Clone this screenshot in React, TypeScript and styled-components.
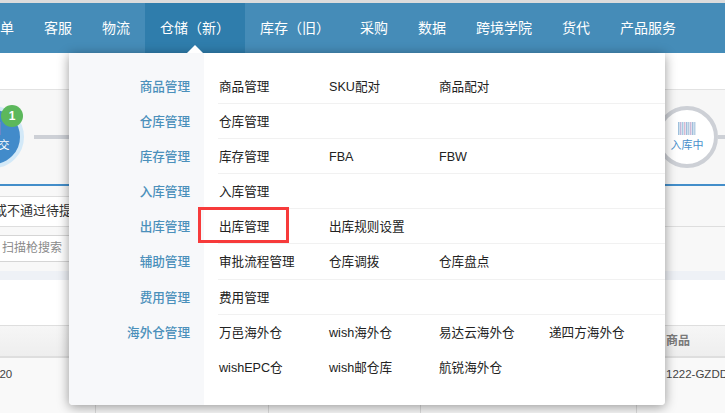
import React from 'react'
import styled, { createGlobalStyle } from 'styled-components'

const navItems = ['订单', '客服', '物流', '仓储（新）', '库存（旧）', '采购', '数据', '跨境学院', '货代', '产品服务']

const menuGroups = [
  { title: '商品管理', items: ['商品管理', 'SKU配对', '商品配对'] },
  { title: '仓库管理', items: ['仓库管理'] },
  { title: '库存管理', items: ['库存管理', 'FBA', 'FBW'] },
  { title: '入库管理', items: ['入库管理'] },
  { title: '出库管理', items: ['出库管理', '出库规则设置'], marked: '出库管理' },
  { title: '辅助管理', items: ['审批流程管理', '仓库调拨', '仓库盘点'] },
  { title: '费用管理', items: ['费用管理'] },
  {
    title: '海外仓管理',
    items: ['万邑海外仓', 'wish海外仓', '易达云海外仓', '递四方海外仓', 'wishEPC仓', 'wish邮仓库', '航锐海外仓'],
  },
]

const barColors = ['#9fc0dc', '#c3b8d8', '#a8cbe2', '#d8b9d2', '#9dbfdc', '#b5c9e0', '#cdb8d6', '#9fc0dc', '#b8cfe4']
const currentBarColors = ['#9fc0dc', '#c3b8d8', '#a8cbe2', '#d8b9d2', '#9dbfdc', '#b5c9e0', '#cdb8d6', '#9a7fc4']

const GlobalStyle = createGlobalStyle`
  html, body {
    margin: 0;
    height: 413px;
    overflow: hidden;
    background: #fff;
    font-family: "Liberation Sans", "Noto Sans CJK SC", sans-serif;
  }
`

const Page = styled.div`
  position: relative;
  width: 725px;
  height: 413px;
  overflow: hidden;
  border-top: 3px solid #dcdcdc;
  box-sizing: border-box;
`

const NavBar = styled.nav`
  display: flex;
  height: 50px;
  margin-left: -29px;
  background: #458cb8;
`

const NavItem = styled.div<{ $active?: boolean }>`
  position: relative;
  padding: 0 15px;
  line-height: 50px;
  font-size: 14px;
  white-space: nowrap;
  color: #fff;
  background: ${(p) => (p.$active ? '#2f7dac' : 'transparent')};
`

const SubHeader = styled.div`
  height: 36px;
  background: #fff;
  border-bottom: 1px solid #e2e2e2;
`

const Stepper = styled.div`
  display: flex;
  align-items: center;
  height: 94px;
  margin-left: -38px;
  background: #f7f7f7;
  border-bottom: 2px solid #438eca;
`

const StepCircle = styled.div<{ $current?: boolean }>`
  position: relative;
  flex: none;
  display: flex;
  flex-direction: column;
  align-items: center;
  justify-content: center;
  gap: 3px;
  width: 62px;
  height: 62px;
  box-sizing: border-box;
  border-radius: 50%;
  border: 4px solid ${(p) => (p.$current ? '#d3e9f8' : '#cdd0d6')};
  background: ${(p) => (p.$current ? '#428bca' : '#fff')};
  color: ${(p) => (p.$current ? '#fff' : '#4a8fcb')};
  font-size: 11px;
  line-height: 14px;
  white-space: nowrap;
`

const StepBadge = styled.span`
  position: absolute;
  top: -5px;
  right: -3px;
  width: 22px;
  height: 22px;
  border-radius: 50%;
  background: #5cb85c;
  color: #fff;
  font-size: 12px;
  font-weight: 700;
  line-height: 22px;
  text-align: center;
`

const Connector = styled.div<{ $end?: boolean }>`
  height: 4px;
  background: #cdd0d6;
  ${(p) => (p.$end ? 'flex: none; width: 7px;' : 'flex: 1; margin-left: 10px;')}
`

const FilterArea = styled.div`
  height: 85px;
  padding-top: 10px;
  box-sizing: border-box;
  background: #f8f8f8;
`

const NoticeRow = styled.div`
  height: 31px;
  box-sizing: border-box;
  border-bottom: 1px solid #dedede;
  font-size: 13px;
  line-height: 28px;
  color: #333;
  white-space: nowrap;
  overflow: hidden;
`

const NoticePanel = styled.div`
  width: 80px;
  height: 30px;
  margin-left: -6px;
  background: #fff;
  border-top: 1px solid #dedede;
  box-sizing: border-box;
`

const SearchRow = styled.div`
  height: 27px;
  margin-top: 8px;
  box-sizing: border-box;
  width: 80px;
  padding-left: 2px;
  background: #fff;
  border-top: 1px solid #d5d5d5;
  border-bottom: 1px solid #d5d5d5;
  font-size: 12px;
  line-height: 25px;
  color: #8a8a8a;
  white-space: nowrap;
`

const RowDivider = styled.div`
  height: 9px;
  background: #eef1f6;
`

const TableGap = styled.div`
  height: 45px;
  background: #fff;
`

const TableGrid = styled.div`
  display: grid;
  grid-template-columns: 96px 173px 152px 216px 1fr;
`

const HeadRow = styled(TableGrid)`
  height: 33px;
  box-sizing: border-box;
  border-top: 1px solid #dedede;
  border-bottom: 2px solid #dedede;
  background: linear-gradient(#f6f6f6, #eeeeee);
  font-size: 12px;
  font-weight: 700;
  line-height: 30px;
  color: #7a7a7a;
`

const BodyRow = styled(TableGrid)`
  height: 56px;
  background: #f9f9f9;
  font-size: 11.5px;
  line-height: 32px;
  color: #444;
`

const BodyCell = styled.div`
  border-right: 1px solid #dcdcdc;
  white-space: nowrap;
  overflow: hidden;
`

const FirstValue = styled.span`
  margin-left: -7px;
`

const LastCell = styled.div`
  padding-left: 29px;
  white-space: nowrap;
  overflow: hidden;
`

const Menu = styled.div`
  position: absolute;
  top: 50px;
  left: 69px;
  width: 596px;
  height: 352px;
  display: flex;
  flex-direction: column;
  padding: 16px 0 20px;
  box-sizing: border-box;
  border-radius: 0 0 4px 4px;
  background: linear-gradient(to right, #f7f8fa 135px, #fff 135px);
  box-shadow: 0 2px 12px rgba(0, 0, 0, 0.4);
`

const MenuCaret = styled.span`
  position: absolute;
  top: -8px;
  left: 118px;
  width: 0;
  height: 0;
  border-left: 8px solid transparent;
  border-right: 8px solid transparent;
  border-bottom: 8px solid #fff;
`

const MenuGroup = styled.div`
  display: flex;
`

const GroupTitle = styled.div`
  flex: none;
  width: 121px;
  height: 34px;
  margin-right: 28px;
  font-size: 12.6px;
  font-weight: 500;
  line-height: 36px;
  text-align: right;
  color: #4b90bb;
`

const GroupItems = styled.div<{ $last?: boolean }>`
  flex: 1;
  display: grid;
  grid-template-columns: repeat(4, 110px);
  grid-auto-rows: 34.1px;
  ${(p) => (p.$last ? 'grid-auto-rows: 35px;' : 'border-bottom: 1px solid #f1f1f1;')}
`

const MenuLink = styled.div<{ $marked?: boolean }>`
  position: relative;
  padding-left: 1px;
  font-size: 12.6px;
  line-height: 36px;
  color: #222;
  white-space: nowrap;
  ${(p) =>
    p.$marked &&
    `
    &::after {
      content: '';
      position: absolute;
      top: -2px;
      left: -20px;
      width: 91px;
      height: 36px;
      box-sizing: border-box;
      border: 3px solid #f73b3b;
    }
  `}
`

const Barcode = ({ colors }: { colors: string[] }) => (
  <svg width={colors.length * 2} height="13" viewBox={`0 0 ${colors.length * 2} 13`}>
    {colors.map((color, i) => (
      <rect key={i} x={i * 2} y="0" width="1.5" height="13" fill={color} />
    ))}
  </svg>
)

export default function App() {
  return (
    <Page>
      <GlobalStyle />
      <NavBar>
        {navItems.map((item) => (
          <NavItem key={item} $active={item === '仓储（新）'}>
            {item}
          </NavItem>
        ))}
      </NavBar>
      <SubHeader />
      <Stepper>
        <StepCircle $current>
          <Barcode colors={currentBarColors} />
          待提交
          <StepBadge>1</StepBadge>
        </StepCircle>
        <Connector />
        <StepCircle>
          <Barcode colors={barColors} />
          入库中
        </StepCircle>
        <Connector $end />
      </Stepper>
      <FilterArea>
        <NoticeRow>
          <NoticePanel>或不通过待提交</NoticePanel>
        </NoticeRow>
        <SearchRow>扫描枪搜索</SearchRow>
      </FilterArea>
      <RowDivider />
      <TableGap />
      <HeadRow>
        <div />
        <div />
        <div />
        <div />
        <LastCell>商品</LastCell>
      </HeadRow>
      <BodyRow>
        <BodyCell>
          <FirstValue>320</FirstValue>
        </BodyCell>
        <BodyCell />
        <BodyCell />
        <BodyCell />
        <LastCell>1222-GZDDR</LastCell>
      </BodyRow>
      <Menu>
        <MenuCaret />
        {menuGroups.map((group, i) => (
          <MenuGroup key={group.title}>
            <GroupTitle>{group.title}</GroupTitle>
            <GroupItems $last={i === menuGroups.length - 1}>
              {group.items.map((item) => (
                <MenuLink key={item} $marked={group.marked === item}>
                  {item}
                </MenuLink>
              ))}
            </GroupItems>
          </MenuGroup>
        ))}
      </Menu>
    </Page>
  )
}
